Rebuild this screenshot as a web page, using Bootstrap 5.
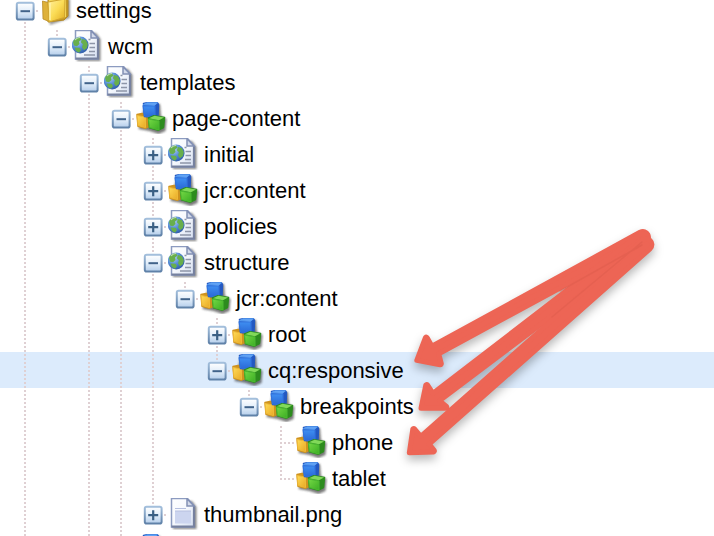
<!DOCTYPE html>
<html lang="en">

<head>
    <meta charset="UTF-8" />
    <meta name="viewport" content="width=device-width, initial-scale=1" />
    <title>Content tree</title>
    <link href="https://cdn.jsdelivr.net/npm/bootstrap@5.3.3/dist/css/bootstrap.min.css" rel="stylesheet">
    <style>
        body {
            font-family: "Liberation Sans", Arial, sans-serif;
            font-size: 22px;
            line-height: 36px;
            color: #000;
            background: #fff;
        }

        .tree-pane {
            height: 100vh;
        }

        .tree {
            margin-top: -8px;
        }

        .tree-row {
            height: 36px;
            padding-left: 8px;
        }

        .tree-row.selected {
            background: #dcebfc;
        }

        .tree-cell {
            width: 32px;
            height: 36px;
        }

        .tree-icon {
            width: 32px;
            height: 32px;
            margin-right: 4px;
            filter: blur(.4px);
        }

        .tree-label {
            padding-top: 2px;
        }

        .arrows g {
            filter: drop-shadow(0 5px 5px rgba(0, 0, 0, .28));
        }

        .arrows path {
            fill: #ed6555;
            stroke: #ed6555;
            stroke-width: 5;
            stroke-linejoin: round;
        }

        .arrows .seam {
            fill: none;
            stroke: #dc5b4c;
            stroke-width: 1.5;
            stroke-linecap: round;
            opacity: .45;
        }
    </style>
</head>

<body>
    <!-- icon sprites -->
    <svg width="0" height="0" class="position-absolute">
        <defs>
            <linearGradient id="g-box" x1="0" y1="0" x2="0" y2="1">
                <stop offset="0" stop-color="#fff" />
                <stop offset=".5" stop-color="#e2eefa" />
                <stop offset="1" stop-color="#b4cdea" />
            </linearGradient>
            <linearGradient id="g-edge" x1="0" y1="0" x2="0" y2="1">
                <stop offset="0" stop-color="#a3bfdc" />
                <stop offset="1" stop-color="#5f81a8" />
            </linearGradient>
            <linearGradient id="g-page" x1="0" y1="0" x2="1" y2="1">
                <stop offset="0" stop-color="#fff" />
                <stop offset=".5" stop-color="#f5f8fd" />
                <stop offset="1" stop-color="#d3ddf0" />
            </linearGradient>
            <linearGradient id="g-blue" x1="0" y1="0" x2="0" y2="1">
                <stop offset="0" stop-color="#3f8ff2" />
                <stop offset="1" stop-color="#2a68d6" />
            </linearGradient>
            <linearGradient id="g-yellow" x1="0" y1="0" x2="1" y2="1">
                <stop offset="0" stop-color="#ffdc58" />
                <stop offset="1" stop-color="#e9aa25" />
            </linearGradient>
            <linearGradient id="g-green" x1="0" y1="0" x2="1" y2="1">
                <stop offset="0" stop-color="#74d845" />
                <stop offset="1" stop-color="#3cae24" />
            </linearGradient>
            <linearGradient id="g-folder" x1="0" y1="0" x2="1" y2="1">
                <stop offset="0" stop-color="#fff0a0" />
                <stop offset=".5" stop-color="#fbdc55" />
                <stop offset="1" stop-color="#dfa91e" />
            </linearGradient>
            <radialGradient id="g-globe" cx=".35" cy=".3" r=".75">
                <stop offset="0" stop-color="#b5d2f3" />
                <stop offset=".5" stop-color="#5b92d8" />
                <stop offset="1" stop-color="#2d5ba8" />
            </radialGradient>
            <filter id="f-soft" x="-30%" y="-30%" width="160%" height="160%">
                <feGaussianBlur stdDeviation="1.2" />
            </filter>
        </defs>
        <symbol id="t-minus" viewBox="0 0 32 36">
            <rect x="8.8" y="10.8" width="16.8" height="16.8" rx="1.8" fill="url(#g-box)" stroke="url(#g-edge)" stroke-width="2" />
            <path d="M12.5 19.2h9.5" stroke="#41638a" stroke-width="2" />
        </symbol>
        <symbol id="t-plus" viewBox="0 0 32 36">
            <rect x="8.8" y="10.8" width="16.8" height="16.8" rx="1.8" fill="url(#g-box)" stroke="url(#g-edge)" stroke-width="2" />
            <path d="M12.2 19.2h10M17.2 14.2v10" stroke="#3b6084" stroke-width="2.2" />
        </symbol>
        <symbol id="i-paper" viewBox="0 0 32 32">
            <path d="M5 3h19l4.5 6v22H5z" fill="#444" opacity=".65" filter="url(#f-soft)" />
            <path d="M3.500.5h16l6.500 7v21.500H3.500z" fill="url(#g-page)" stroke="#8c9bc0" stroke-width="1.5" />
            <path d="M26 8v20.500H3.500" fill="none" stroke="#76819f" stroke-width="2.2" />
            <path d="M19 .8v7.200h7z" fill="#d3daea" stroke="#8290b4" stroke-width="1.5" />
        </symbol>
        <symbol id="i-page" viewBox="0 0 32 32">
            <use href="#i-paper" />
            <path d="M16.500 9.500h2M17.500 13.500h5.500M17.500 17.500h5.500M17 21.500h6M12 25h11" stroke="#8d95a8" stroke-width="1.5" />
            <circle cx="8.2" cy="15" r="8.4" fill="url(#g-globe)" />
            <path d="M1 12C2 8.500 5 7.200 8 7.500l1.500 2-2.500 2 .5 2.500-2.500 2.200-3-.7zM10 9l3.800 1 2 4-.8 4-3 2.200-2-3 .9-3-2-2zM2.500 17.500l5 .3 1.500 2.200-2 2.700-3-1.700z" fill="#68af4c" />
            <path d="M3 10q2-2.500 5-2.500" stroke="#c5deb7" stroke-width="1.2" fill="none" />
        </symbol>
        <symbol id="i-file" viewBox="0 0 32 32">
            <use href="#i-paper" />
            <rect x="7" y="13" width="16" height="12.5" fill="#ccd5ef" />
            <path d="M7 10.500h11M7 13h16" stroke="#b5bfdf" stroke-width="1.2" />
        </symbol>
        <symbol id="i-cubes" viewBox="0 0 32 32">
            <path d="M9 2h15l1 12 5.500 3-1 12-7 3-9-3-11-2z" fill="#333" opacity=".65" filter="url(#f-soft)" />
            <path d="M1 12.500l5-1L14 13v11l-4.500 2.200-7.500-2z" fill="#cf931f" stroke="#cf931f" stroke-width="1.5" stroke-linejoin="round" />
            <path d="M1 13.500l8.500 1.500v10.500l-7.500-2z" fill="url(#g-yellow)" stroke="#efb936" stroke-linejoin="round" />
            <path d="M7.500 1.500L11 .8h10.500l1 1.500-.5 11-3.500 2.200-10-1z" fill="#2459c2" stroke="#2459c2" stroke-width="1.5" stroke-linejoin="round" />
            <path d="M7 3.800h12V15l-10.500-1z" fill="url(#g-blue)" stroke="#3274de" stroke-width="1.2" stroke-linejoin="round" />
            <path d="M7.500 2.500L11 .8h10.500l-3 2.500z" fill="#65a6f5" stroke="#559af0" stroke-linejoin="round" />
            <path d="M12.500 16l5.500-2.200L28.500 15.500l-1 10-5 2.700-9-2.500z" fill="#2d8c1e" stroke="#2d8c1e" stroke-width="1.5" stroke-linejoin="round" />
            <path d="M12.500 17l10.500 2v9l-9.500-2.500z" fill="url(#g-green)" stroke="#4cb932" stroke-linejoin="round" />
            <path d="M13 16.300l5.500-2.500 9.500 1.700-5 2.800z" fill="#82d95a" />
        </symbol>
        <symbol id="i-folder" viewBox="0 0 32 32">
            <path d="M6 8l24-3v19L10 31z" fill="#444" opacity=".55" filter="url(#f-soft)" />
            <path d="M8 4l19-2 1 1v19l-4 4-16 2z" fill="#c59a25" stroke="#b38825" />
            <path d="M9 4l17-2v21L8 26z" fill="#f6d95b" />
            <path d="M2.500 7L8 8.500l1.500 19.200L3 25z" fill="#deb139" stroke="#b98c25" stroke-width=".8" />
            <path d="M8 8l17-3-.5 18.500L9 28z" fill="url(#g-folder)" stroke="#d0a52f" />
            <path d="M10 9v17" stroke="#fff2a9" stroke-width="1.5" />
        </symbol>
    </svg>

    <main class="tree-pane position-relative overflow-hidden">
        <div id="tree" class="tree d-flex flex-column"></div>

        <!-- annotation arrows over the tree -->
        <svg class="arrows position-absolute top-0 start-0 pe-none" width="714" height="536" viewBox="0 0 714 536">
            <g>
                <path d="M416.800 360.400L425.500 337.500Q426.500 336.500 427.300 338L431.900 346.300L640 232.300C647 229 652 238 645 242L438.800 353.800L441.300 363.500Q441.500 365 440 364.800Z" />
                <path d="M421 408.300L425.800 385Q426.700 383.800 427.800 385.300L433 393.300L639.500 234.500C647 231 652 240 646 245.500L439.500 400.700L446.500 406.500Q447.500 408 446 408.300Z" />
                <path d="M409.300 452.800L412.800 429Q413.500 427.800 414.700 429L420.800 436.300L641 241.500C648 235 655.500 243 650 248.800L429.200 444.200L434 450Q435 451.300 433.500 452Z" />
            </g>
            <path class="seam" d="M560 291L642 245M552 317L642 242" />
        </svg>
    </main>

    <script>
        // guides, one character per level: "|" line through, "T" branch, "L" last branch, "." blank
        // lines: whether a line runs above and below the toggle
        const rows = [
            { guides: "", toggle: "minus", lines: [1, 1], icon: "folder", label: "settings" },
            { guides: "|", toggle: "minus", lines: [1, 0], icon: "page", label: "wcm" },
            { guides: "|.", toggle: "minus", lines: [1, 1], icon: "page", label: "templates" },
            { guides: "|.|", toggle: "minus", lines: [1, 1], icon: "cubes", label: "page-content" },
            { guides: "|.||", toggle: "plus", lines: [1, 1], icon: "page", label: "initial" },
            { guides: "|.||", toggle: "plus", lines: [1, 1], icon: "cubes", label: "jcr:content" },
            { guides: "|.||", toggle: "plus", lines: [1, 1], icon: "page", label: "policies" },
            { guides: "|.||", toggle: "minus", lines: [1, 1], icon: "page", label: "structure" },
            { guides: "|.|||", toggle: "minus", lines: [1, 0], icon: "cubes", label: "jcr:content" },
            { guides: "|.|||.", toggle: "plus", lines: [1, 1], icon: "cubes", label: "root" },
            { guides: "|.|||.", toggle: "minus", lines: [1, 0], icon: "cubes", label: "cq:responsive", selected: true },
            { guides: "|.|||..", toggle: "minus", lines: [1, 0], icon: "cubes", label: "breakpoints" },
            { guides: "|.|||...T", icon: "cubes", label: "phone" },
            { guides: "|.|||...L", icon: "cubes", label: "tablet" },
            { guides: "|.||", toggle: "plus", lines: [1, 0], icon: "file", label: "thumbnail.png" },
            { guides: "|.|", toggle: "plus", lines: [1, 1], icon: "cubes", label: "" }
        ];

        function dots(d) {
            return `<path d="${d}" fill="none" stroke="#dfd0d3" stroke-width="2" stroke-dasharray="2 2"/>`;
        }

        function cell(body) {
            return `<svg class="tree-cell flex-shrink-0" viewBox="0 0 32 36">${body}</svg>`;
        }

        function guideCell(kind) {
            if (kind === "|") return cell(dots("M17 2v34"));
            if (kind === "T") return cell(dots("M17 2v34") + dots("M20 19h10"));
            if (kind === "L") return cell(dots("M17 2v18") + dots("M20 19h10"));
            return cell("");
        }

        function toggleCell(row) {
            let body = dots("M28 19h2");
            if (row.lines[0]) body += dots("M17 2v8");
            if (row.lines[1]) body += dots("M17 30v6");
            return cell(body + `<use href="#t-${row.toggle}"/>`);
        }

        document.getElementById("tree").innerHTML = rows.map(row => `
            <div class="tree-row d-flex align-items-center${row.selected ? " selected" : ""}">
                ${row.guides.split("").map(guideCell).join("")}${row.toggle ? toggleCell(row) : ""}
                <svg class="tree-icon flex-shrink-0" viewBox="0 0 32 32"><use href="#i-${row.icon}"/></svg>
                <span class="tree-label text-nowrap">${row.label}</span>
            </div>`).join("");
    </script>
</body>

</html>
